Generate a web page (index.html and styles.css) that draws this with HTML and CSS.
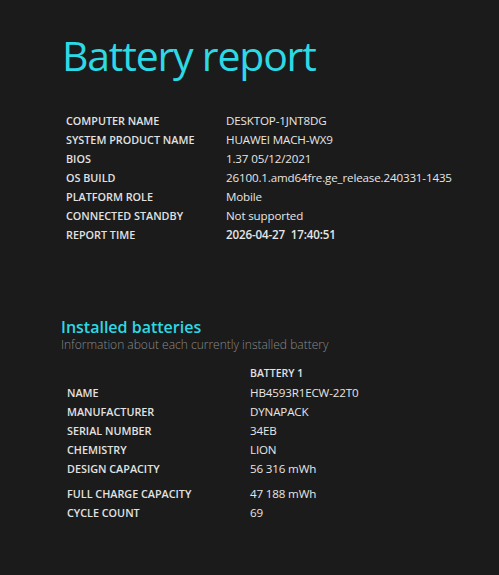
FILE: index.html
```html
<!DOCTYPE html>
<html>
<head>
<meta charset="utf-8">
<link rel="stylesheet" href="styles.css">
</head>
<body>
<div class="page">
  <h1 class="title">Battery report</h1>
  <div class="info">
    <div class="label">COMPUTER NAME</div><div class="value">DESKTOP-1JNT8DG</div>
    <div class="label">SYSTEM PRODUCT NAME</div><div class="value">HUAWEI MACH-WX9</div>
    <div class="label">BIOS</div><div class="value">1.37 05/12/2021</div>
    <div class="label">OS BUILD</div><div class="value">26100.1.amd64fre.ge_release.240331-1435</div>
    <div class="label">PLATFORM ROLE</div><div class="value">Mobile</div>
    <div class="label">CONNECTED STANDBY</div><div class="value">Not supported</div>
    <div class="label">REPORT TIME</div><div class="value time">2026-04-27&nbsp;&nbsp;17:40:51</div>
  </div>
  <h2 class="section">Installed batteries</h2>
  <div class="sub">Information about each currently installed battery</div>
  <div class="batt">
    <div class="label"></div><div class="label head">BATTERY 1</div>
    <div class="label">NAME</div><div class="value">HB4593R1ECW-22T0</div>
    <div class="label">MANUFACTURER</div><div class="value">DYNAPACK</div>
    <div class="label">SERIAL NUMBER</div><div class="value">34EB</div>
    <div class="label">CHEMISTRY</div><div class="value">LION</div>
    <div class="label">DESIGN CAPACITY</div><div class="value">56 316 mWh</div>
    <div class="label gap">FULL CHARGE CAPACITY</div><div class="value gap">47 188 mWh</div>
    <div class="label">CYCLE COUNT</div><div class="value">69</div>
  </div>
</div>
</body>
</html>
```
FILE: styles.css
```css
html, body {
  margin: 0;
  padding: 0;
  background: #1b1b1b;
}
body {
  font-family: "Open Sans", "Noto Sans", sans-serif;
  color: #e6e6e6;
  height: 575px;
  overflow: hidden;
}
.page {
  padding: 0 0 0 61px;
}
.title {
  margin: 0;
  padding-top: 27px;
  padding-left: 1px;
  font-size: 41px;
  font-weight: 400;
  line-height: 56px;
  color: #2cd9e4;
  letter-spacing: -1.2px;
}
.info {
  display: grid;
  grid-template-columns: 160px auto;
  margin-top: 28px;
  padding-left: 5px;
}
.label {
  font-size: 10.8px;
  font-weight: 600;
  color: #e2e2e2;
  white-space: nowrap;
  line-height: 19px;
}
.value {
  font-size: 11.6px;
  letter-spacing: -0.15px;
  color: #e6e6e6;
  white-space: nowrap;
  line-height: 19px;
}
.time {
  font-weight: 600;
}
.section {
  margin: 74px 0 0;
  font-size: 16px;
  font-weight: 600;
  line-height: 19px;
  color: #2cd9e4;
}
.sub {
  font-size: 12px;
  font-weight: 300;
  color: #8a8a8a;
  line-height: 15px;
}
.batt {
  display: grid;
  grid-template-columns: 183px auto;
  margin-top: 12px;
  padding-left: 6px;
}
.head {
  font-size: 10.5px;
}
.gap {
  padding-top: 6px;
}
```
